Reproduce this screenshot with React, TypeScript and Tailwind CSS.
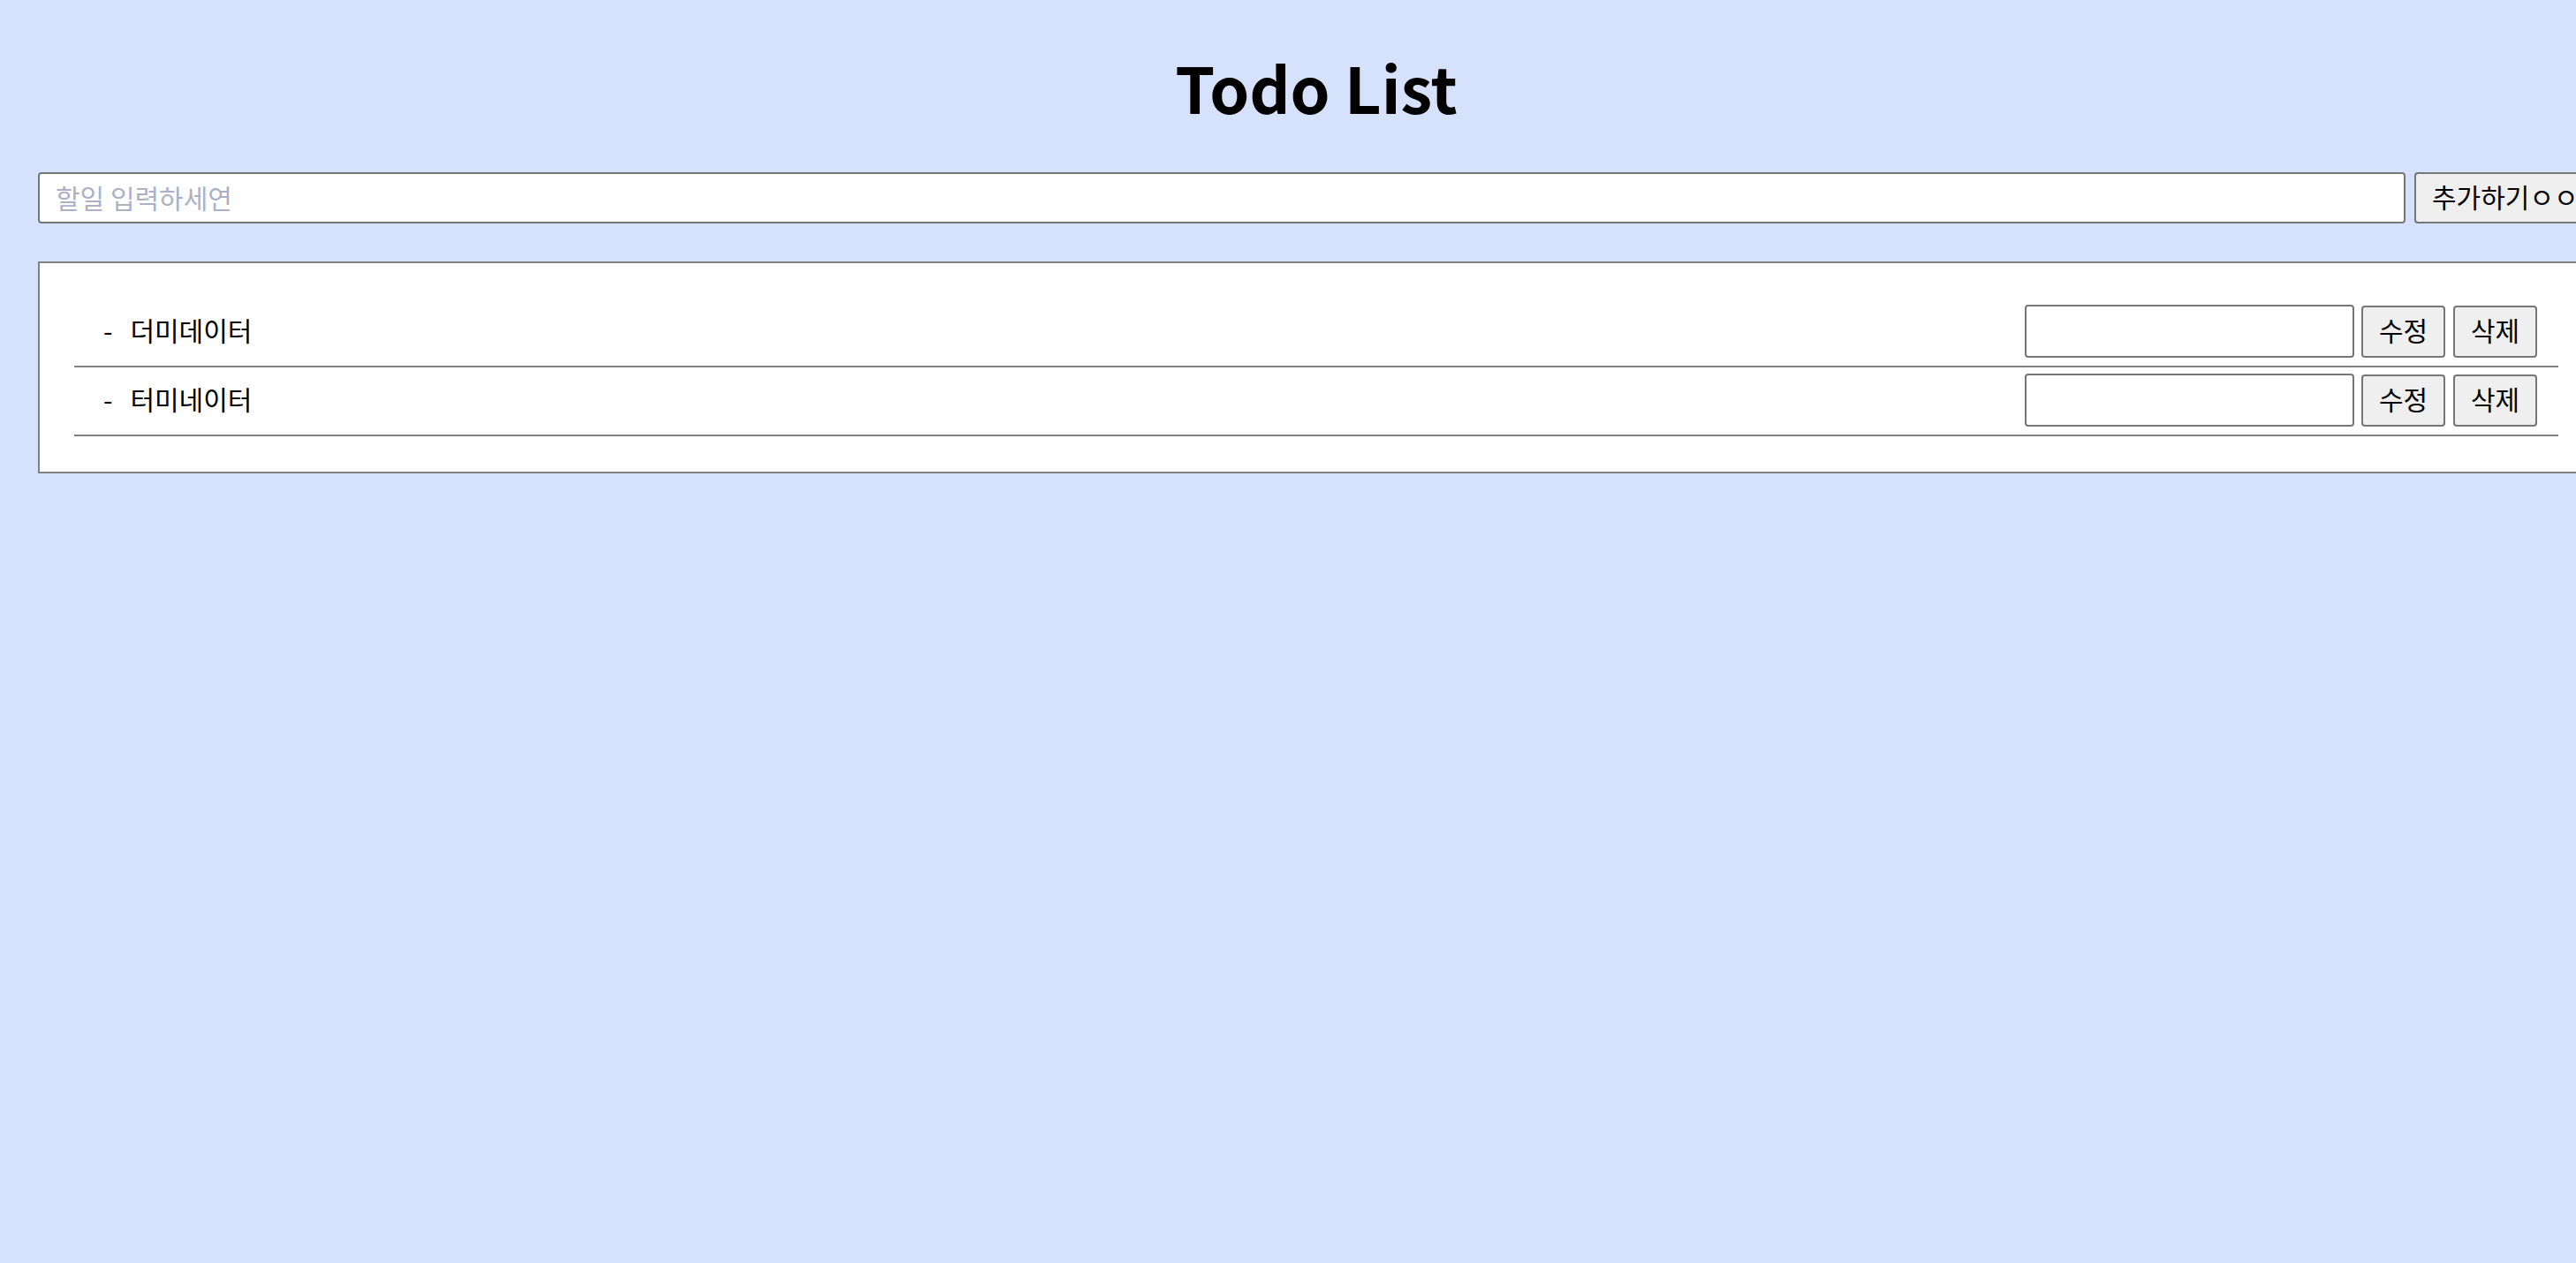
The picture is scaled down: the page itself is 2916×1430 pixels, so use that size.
import React from "react";

const items = ["더미데이터", "터미네이터"];

export default function App() {
  return (
    <div className="min-h-screen w-full overflow-hidden bg-[#d6e2fc] font-['Noto_Sans_CJK_KR',sans-serif] text-black">
      <div className="ml-[43px] w-[2894px] pt-[62px]">
        <h1 className="text-center text-[72px] font-bold leading-none">Todo List</h1>
        <div className="mt-[61px] flex gap-[10px]">
          <input
            className="h-[58px] w-[2680px] shrink-0 rounded-[4px] border-2 border-[#767676] bg-white px-[18px] pb-[3px] text-[30px] outline-none placeholder:text-[#aab1c6]"
            placeholder="할일 입력하세연"
          />
          <button className="h-[58px] shrink-0 whitespace-nowrap rounded-[4px] border-2 border-[#767676] bg-[#efefef] px-[18px] pb-[3px] text-[30px]">
            추가하기ㅇㅇ
          </button>
        </div>
        <div className="mt-[43px] border-2 border-[#808080] bg-white py-[40px] pl-[39px]">
          <ul className="w-[2812px]">
            {items.map((t) => (
              <li
                key={t}
                className="flex items-center border-b-2 border-[#808080] pt-[7px] pb-[9px] pr-[24px] pl-[33px]"
              >
                <span className="pb-[5px] text-[30px] leading-none">-</span>
                <span className="ml-[20px] flex-1 pb-[5px] text-[30px] leading-none">{t}</span>
                <input className="h-[60px] w-[373px] rounded-[4px] border-2 border-[#767676] bg-white" />
                <button className="ml-[8px] h-[59px] w-[95px] rounded-[4px] border-2 border-[#767676] bg-[#efefef] pb-[3px] text-[30px]">
                  수정
                </button>
                <button className="ml-[9px] h-[59px] w-[95px] rounded-[4px] border-2 border-[#767676] bg-[#efefef] pb-[3px] text-[30px]">
                  삭제
                </button>
              </li>
            ))}
          </ul>
        </div>
      </div>
    </div>
  );
}
